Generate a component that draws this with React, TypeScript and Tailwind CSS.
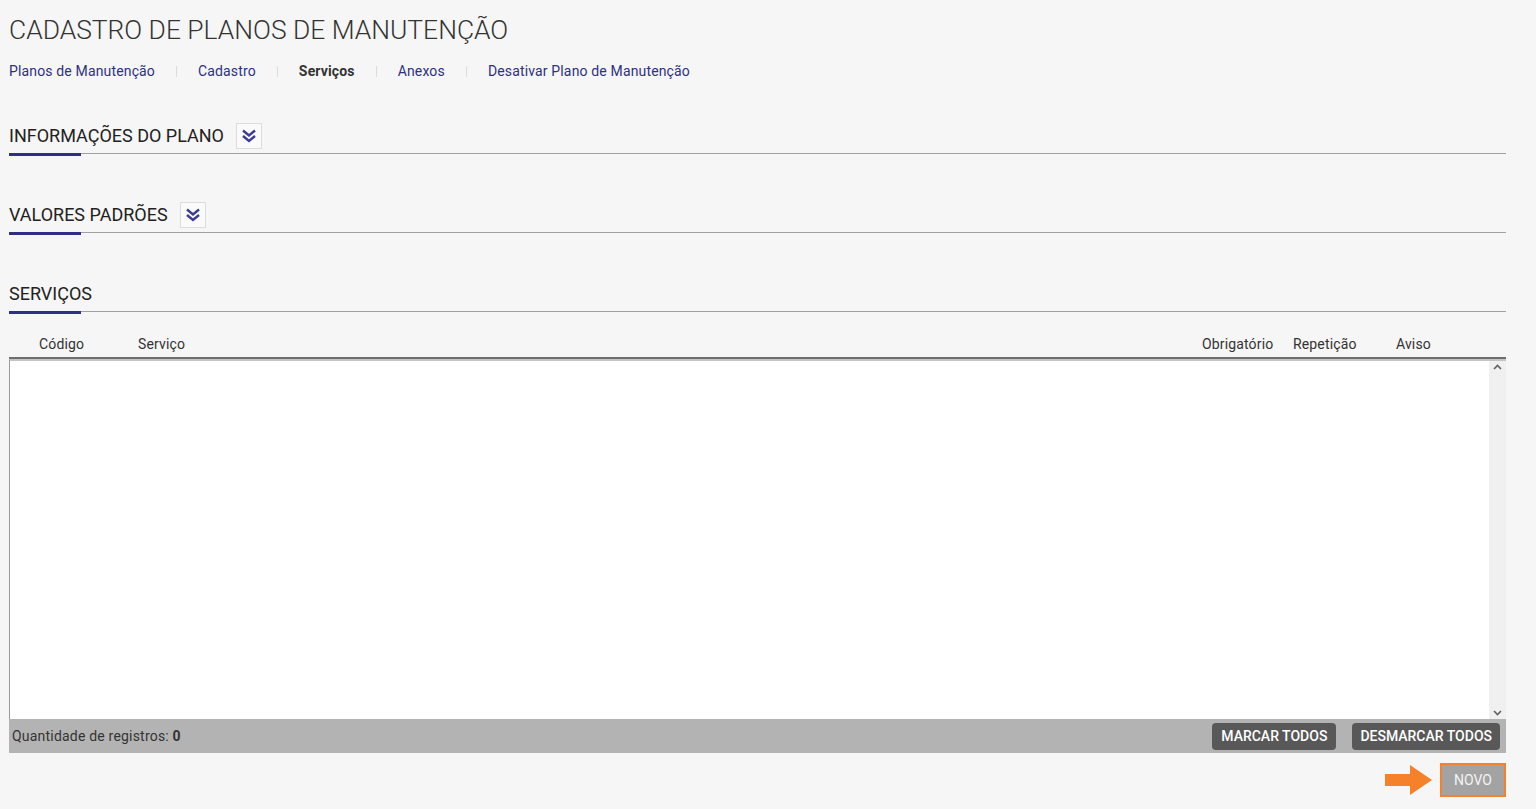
import React from 'react';

function DoubleChevron() {
  return (
    <svg width="16" height="14" viewBox="0 0 16 14" fill="none">
      <path d="M2 1.5 L8 6.5 L14 1.5" stroke="#3a3c96" strokeWidth="2.4" strokeLinejoin="miter" />
      <path d="M2 7 L8 12 L14 7" stroke="#3a3c96" strokeWidth="2.4" strokeLinejoin="miter" />
    </svg>
  );
}

function SectionTitle({ title, toggle }: { title: string; toggle?: boolean }) {
  return (
    <div className="relative border-b border-[#a0a0a0]">
      <div className="flex items-center h-[34px] gap-[12px]">
        <h2 className="text-[18px] text-[#222] leading-none">{title}</h2>
        {toggle && (
          <button className="w-[26px] h-[26px] flex items-center justify-center bg-[#fafafa] border border-[#dcdcdc]">
            <DoubleChevron />
          </button>
        )}
      </div>
      <div className="absolute left-0 -bottom-[3px] w-[72px] h-[3px] bg-[#2e3183]" />
    </div>
  );
}

export default function App() {
  const nav = [
    { label: 'Planos de Manutenção', active: false },
    { label: 'Cadastro', active: false },
    { label: 'Serviços', active: true },
    { label: 'Anexos', active: false },
    { label: 'Desativar Plano de Manutenção', active: false },
  ];

  return (
    <div className="min-h-[809px] bg-[#f6f6f6] font-['Roboto',sans-serif] px-[9px] pr-[30px]">
      {/* Title */}
      <h1 className="pt-[14px] text-[26.4px] font-light text-[#333] leading-[32px]">
        CADASTRO DE PLANOS DE MANUTENÇÃO
      </h1>

      {/* Tabs */}
      <nav className="flex items-center mt-[15px] text-[14px] tracking-[0.15px] h-[20px]">
        {nav.map((n, i) => (
          <React.Fragment key={n.label}>
            {i > 0 && <span className="mx-[21px] w-px h-[11px] bg-[#dcdcdc]" />}
            <a className={n.active ? 'font-bold text-[#333]' : 'text-[#2e3183]'}>{n.label}</a>
          </React.Fragment>
        ))}
      </nav>

      <div className="mt-[38px]">
        <SectionTitle title="INFORMAÇÕES DO PLANO" toggle />
      </div>
      <div className="mt-[44px]">
        <SectionTitle title="VALORES PADRÕES" toggle />
      </div>
      <div className="mt-[44px]">
        <SectionTitle title="SERVIÇOS" />
      </div>

      {/* Table */}
      <div className="mt-[22px]">
        <div className="flex text-[14px] tracking-[0.15px] text-[#333] h-[20px] items-center">
          <div className="w-[129px] pl-[30px]">Código</div>
          <div className="flex-1">Serviço</div>
          <div className="w-[91px]">Obrigatório</div>
          <div className="w-[103px]">Repetição</div>
          <div className="w-[110px]">Aviso</div>
        </div>
        <div className="mt-[3px] border-t-[2px] border-[#6e6e6e]">
          <div className="flex h-[360px] bg-white border-l border-t-[2px] border-l-[#9a9a9a] border-t-[#c4c4c4]">
            <div className="flex-1" />
            <div className="w-[17px] bg-[#f0f0f0] flex flex-col justify-between items-center py-[3px]">
              <svg width="9" height="6" viewBox="0 0 9 6">
                <path d="M1 5 L4.5 1.5 L8 5" stroke="#606060" strokeWidth="1.6" fill="none" />
              </svg>
              <svg width="9" height="6" viewBox="0 0 9 6">
                <path d="M1 1 L4.5 4.5 L8 1" stroke="#606060" strokeWidth="1.6" fill="none" />
              </svg>
            </div>
          </div>
        </div>
        <div className="flex items-center justify-between h-[34px] bg-[#b3b3b3] pl-[3px] pr-[6px]">
          <span className="text-[14px] tracking-[0.2px] text-[#333]">
            Quantidade de registros: <b>0</b>
          </span>
          <div className="flex gap-[16px]">
            <button className="h-[27px] px-[9px] rounded-[4px] bg-[#585858] text-white text-[14px] font-medium">
              MARCAR TODOS
            </button>
            <button className="h-[27px] px-[8px] rounded-[4px] bg-[#585858] text-white text-[14px] font-medium">
              DESMARCAR TODOS
            </button>
          </div>
        </div>
      </div>

      {/* Novo */}
      <div className="flex justify-end items-center mt-[10px] gap-[8px]">
        <svg width="47" height="30" viewBox="0 0 47 30">
          <path d="M0 9 H25 V0 L47 15 L25 30 V21 H0 Z" fill="#f5812a" />
        </svg>
        <button className="w-[66px] h-[34px] border-2 border-[#f5812a] bg-[#a3a3a3] text-[#f3f3f3] text-[14px]">
          NOVO
        </button>
      </div>
    </div>
  );
}
